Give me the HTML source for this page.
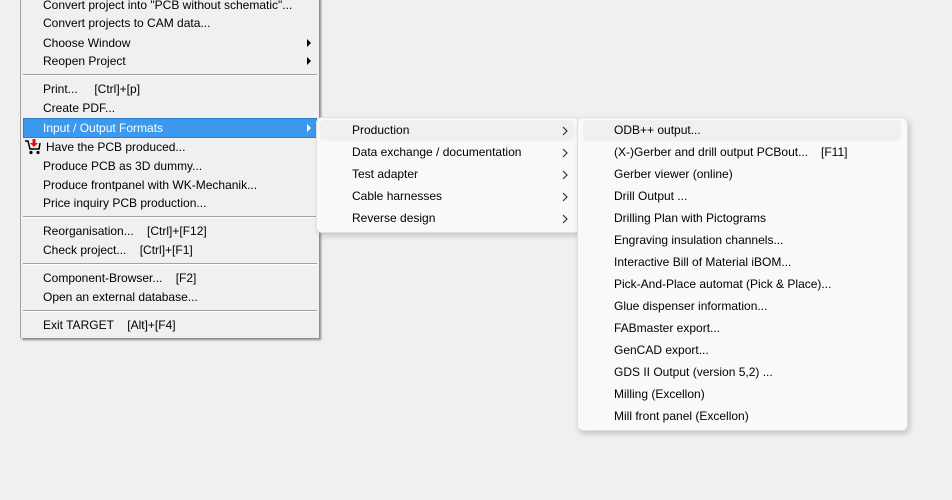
<!DOCTYPE html><html><head><style>
body{margin:0;width:952px;height:500px;background:#f0f0f0;position:relative;overflow:hidden;font-family:"Liberation Sans",sans-serif;font-size:12px;color:#000}
.m1{position:absolute;left:20px;top:-4px;width:298px;height:342px;background:#f0f0f0;border-left:1px solid #a0a0a0;box-shadow:2px 2px 2px #888}
.i{position:absolute;left:22px;white-space:nowrap;line-height:18px}
.sep{position:absolute;left:2px;width:294px;height:1px;background:#a0a0a0;border-bottom:1px solid #fff}
.ar{position:absolute;right:8px;width:0;height:0;border-left:4px solid #000;border-top:4px solid transparent;border-bottom:4px solid transparent}
.hl{position:absolute;left:2px;width:294px;height:20px;background:#3c99ee;border:1px solid #2a7fd0;box-sizing:border-box}
.m2,.m3{position:absolute;background:#f9f9f9;border:1px solid #e0e0e0;border-radius:6px;box-shadow:2px 3px 6px rgba(0,0,0,.18)}
.m2{left:316px;top:117px;width:262px;height:114px}
.m3{left:577px;top:117px;width:329px;height:312px}
.j{position:absolute;white-space:nowrap;line-height:18px;font-size:12px}
.gt{position:absolute;left:244px}
</style></head><body>
<div class="m1">
<div class="i" style="top:0">Convert project into "PCB without schematic"...</div>
<div class="i" style="top:18px">Convert projects to CAM data...</div>
<div class="i" style="top:38px">Choose Window</div><div class="ar" style="top:43px"></div>
<div class="i" style="top:56px">Reopen Project</div><div class="ar" style="top:61px"></div>
<div class="sep" style="top:78px"></div>
<div class="i" style="top:84px">Print...&nbsp;&nbsp;&nbsp;&nbsp;&nbsp;[Ctrl]+[p]</div>
<div class="i" style="top:103px">Create PDF...</div>
<div class="hl" style="top:122px"></div>
<div class="i" style="top:123px;color:#fff">Input / Output Formats</div><div class="ar" style="top:128px;border-left-color:#fff"></div>
<svg style="position:absolute;left:3px;top:142px" width="18" height="18" viewBox="0 0 18 18">
<path d="M1 3h3l2 8h9l1-6" fill="none" stroke="#000" stroke-width="1.5"/>
<circle cx="7" cy="14.5" r="1.6" fill="#000"/><circle cx="14" cy="14.5" r="1.6" fill="#000"/>
<path d="M8.5 1h3v4h2.5l-4 4-4-4h2.5z" fill="#e01010"/>
</svg>
<div class="i" style="top:142px;left:25px">Have the PCB produced...</div>
<div class="i" style="top:161px">Produce PCB as 3D dummy...</div>
<div class="i" style="top:180px">Produce frontpanel with WK-Mechanik...</div>
<div class="i" style="top:198px">Price inquiry PCB production...</div>
<div class="sep" style="top:220px"></div>
<div class="i" style="top:226px">Reorganisation...&nbsp;&nbsp;&nbsp;&nbsp;[Ctrl]+[F12]</div>
<div class="i" style="top:245px">Check project...&nbsp;&nbsp;&nbsp;&nbsp;[Ctrl]+[F1]</div>
<div class="sep" style="top:267px"></div>
<div class="i" style="top:273px">Component-Browser...&nbsp;&nbsp;&nbsp;&nbsp;[F2]</div>
<div class="i" style="top:292px">Open an external database...</div>
<div class="sep" style="top:314px"></div>
<div class="i" style="top:320px">Exit TARGET&nbsp;&nbsp;&nbsp;&nbsp;[Alt]+[F4]</div>
</div>
<div class="m2">
<div style="position:absolute;left:3px;top:2px;width:254px;height:21px;background:#f0f0f0;border-radius:4px"></div>
<div class="j" style="left:35px;top:3px">Production</div>
<div class="j" style="left:35px;top:25px">Data exchange / documentation</div>
<div class="j" style="left:35px;top:47px">Test adapter</div>
<div class="j" style="left:35px;top:69px">Cable harnesses</div>
<div class="j" style="left:35px;top:91px">Reverse design</div>
<svg class="gt" style="top:8px" width="8" height="100" viewBox="0 0 8 100" fill="none" stroke="#333" stroke-width="1.2">
<path d="M2 1l4 4-4 4"/><path d="M2 23l4 4-4 4"/><path d="M2 45l4 4-4 4"/><path d="M2 67l4 4-4 4"/><path d="M2 89l4 4-4 4"/>
</svg>
</div>
<div class="m3">
<div style="position:absolute;left:5px;top:2px;width:318px;height:21px;background:#f0f0f0;border-radius:4px"></div>
<div class="j" style="left:36px;top:3px">ODB++ output...</div>
<div class="j" style="left:36px;top:25px">(X-)Gerber and drill output PCBout...</div><div class="j" style="left:243px;top:25px">[F11]</div>
<div class="j" style="left:36px;top:47px">Gerber viewer (online)</div>
<div class="j" style="left:36px;top:69px">Drill Output ...</div>
<div class="j" style="left:36px;top:91px">Drilling Plan with Pictograms</div>
<div class="j" style="left:36px;top:113px">Engraving insulation channels...</div>
<div class="j" style="left:36px;top:135px">Interactive Bill of Material iBOM...</div>
<div class="j" style="left:36px;top:157px">Pick-And-Place automat (Pick &amp; Place)...</div>
<div class="j" style="left:36px;top:179px">Glue dispenser information...</div>
<div class="j" style="left:36px;top:201px">FABmaster export...</div>
<div class="j" style="left:36px;top:223px">GenCAD export...</div>
<div class="j" style="left:36px;top:245px">GDS II Output (version 5,2) ...</div>
<div class="j" style="left:36px;top:267px">Milling (Excellon)</div>
<div class="j" style="left:36px;top:289px">Mill front panel (Excellon)</div>
</div>
</body></html>
